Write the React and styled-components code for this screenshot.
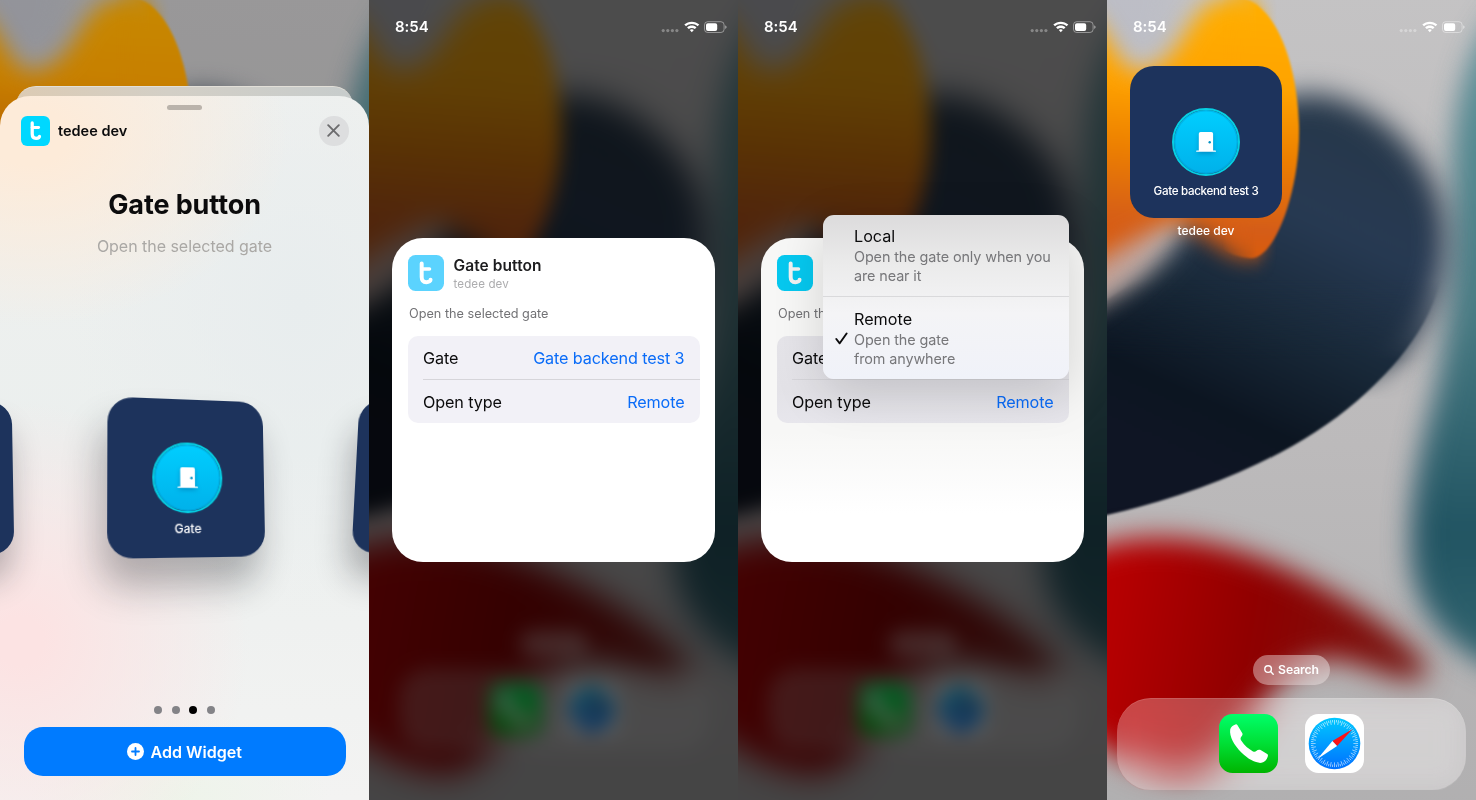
import React, { useId } from "react";
import styled, { createGlobalStyle, css } from "styled-components";

const GlobalStyle = createGlobalStyle`
  * { box-sizing: border-box; }
  body {
    margin: 0;
    overflow: hidden;
    font-family: Inter, "Liberation Sans", sans-serif;
    color: #0b0b0c;
    background: #b9b8b9;
  }
`;

const Gallery = styled.main`
  display: flex;
  width: 1476px;
  height: 800px;
`;

const Phone = styled.section`
  position: relative;
  flex: 0 0 369px;
  height: 800px;
  overflow: hidden;
  isolation: isolate;
  display: flex;
  flex-direction: column;
`;

const Backdrop = styled.div`
  position: absolute;
  inset: 0;
  z-index: -1;
  overflow: hidden;
`;

const BackdropEffect = styled.div`
  position: absolute;
  inset: 0;
  ${(p) => p.$mode === "dim" && css`filter: brightness(0.78);`}
  ${(p) =>
    p.$mode === "blurred" &&
    css`
      inset: -30px;
      padding: 30px;
      filter: blur(9.5px) brightness(0.39) saturate(0.92);
    `}
`;

const WallpaperSvg = styled.svg`
  display: block;
  overflow: visible;
`;

const ORANGE =
  "M-90 5 L-20 12 C2 28,10 68,30 71 C55 70,68 50,80 30 C95 5,108 -3,128 -3 C166 -2,190 58,192 125 C194 188,168 262,142 258 C118 256,108 242,90 232 C62 208,30 240,-90 305 Z";
const NAVY =
  "M-120 350 C-40 330,35 285,70 240 C110 180,135 94,200 94 C262 92,338 162,338 232 C341 300,306 352,250 401 C190 453,100 492,0 515 L-120 540 Z";
const RED =
  "M-90 600 C-40 548,10 536,60 538 C130 540,210 580,260 613 C300 640,340 676,310 680 C280 682,245 656,215 660 C180 668,162 692,140 725 C118 762,94 778,68 775 C40 770,15 762,-10 742 L-90 700 Z";
const TEAL =
  "M440 -60 L396 10 C366 44,350 100,348 160 C348 260,344 330,328 400 C314 450,301 510,306 565 C312 615,345 655,420 680 Z";

function Wallpaper() {
  const id = useId().replace(/[^a-zA-Z0-9]/g, "");
  const ref = (name) => `url(#${id}${name})`;
  return (
    <WallpaperSvg width="369" height="800" viewBox="0 0 369 800">
      <defs>
        <linearGradient id={id + "bg"} x1="0" y1="0" x2="0" y2="1">
          <stop offset="0" stopColor="#c5c4c5" />
          <stop offset="0.55" stopColor="#bcbabb" />
          <stop offset="1" stopColor="#afaeaf" />
        </linearGradient>
        <linearGradient id={id + "or"} gradientUnits="userSpaceOnUse" x1="60" y1="0" x2="40" y2="270">
          <stop offset="0" stopColor="#ffae00" />
          <stop offset="0.3" stopColor="#ffa300" />
          <stop offset="0.55" stopColor="#ed8000" />
          <stop offset="0.82" stopColor="#d55d18" />
          <stop offset="1" stopColor="#dc5a05" />
        </linearGradient>
        <linearGradient id={id + "nv"} gradientUnits="userSpaceOnUse" x1="270" y1="120" x2="110" y2="470">
          <stop offset="0" stopColor="#263749" />
          <stop offset="0.3" stopColor="#273a53" />
          <stop offset="0.6" stopColor="#182838" />
          <stop offset="0.85" stopColor="#0c1521" />
          <stop offset="1" stopColor="#0f1524" />
        </linearGradient>
        <linearGradient id={id + "rd"} gradientUnits="userSpaceOnUse" x1="0" y1="600" x2="300" y2="650">
          <stop offset="0" stopColor="#b80001" />
          <stop offset="0.5" stopColor="#8e0000" />
          <stop offset="1" stopColor="#781511" />
        </linearGradient>
        <linearGradient id={id + "tl"} x1="0" y1="0" x2="0" y2="1">
          <stop offset="0.05" stopColor="#5a959b" />
          <stop offset="0.5" stopColor="#487b83" />
          <stop offset="0.8" stopColor="#215462" />
          <stop offset="1" stopColor="#336670" />
        </linearGradient>
        <linearGradient id={id + "rf"} gradientUnits="userSpaceOnUse" x1="115" y1="0" x2="150" y2="0">
          <stop offset="0" stopColor="#000" />
          <stop offset="1" stopColor="#fff" />
        </linearGradient>
        <linearGradient id={id + "lf"} gradientUnits="userSpaceOnUse" x1="150" y1="0" x2="170" y2="0">
          <stop offset="0" stopColor="#fff" />
          <stop offset="1" stopColor="#000" />
        </linearGradient>
        <linearGradient id={id + "df"} gradientUnits="userSpaceOnUse" x1="0" y1="280" x2="0" y2="360">
          <stop offset="0" stopColor="#000" />
          <stop offset="1" stopColor="#fff" />
        </linearGradient>
        <linearGradient id={id + "uf"} gradientUnits="userSpaceOnUse" x1="0" y1="360" x2="0" y2="400">
          <stop offset="0" stopColor="#fff" />
          <stop offset="1" stopColor="#000" />
        </linearGradient>
        {[["r", "rf"], ["l", "lf"], ["d", "df"], ["u", "uf"]].map(([m, g]) => (
          <mask key={m} id={id + "m" + m} maskUnits="userSpaceOnUse" x="-150" y="-100" width="650" height="1000">
            <rect x="-150" y="-100" width="650" height="1000" fill={ref(g)} />
          </mask>
        ))}
        {[1, 11, 14].map((n) => (
          <filter
            key={n}
            id={id + "b" + n}
            filterUnits="userSpaceOnUse"
            x="-180"
            y="-150"
            width="720"
            height="1100"
            colorInterpolationFilters="sRGB"
          >
            <feGaussianBlur stdDeviation={n} />
          </filter>
        ))}
      </defs>
      <rect x="-60" y="-60" width="500" height="920" fill={ref("bg")} />
      <path d="M-40 -40 L80 -40 L60 50 L-10 60Z" fill="#b5b9ca" opacity="0.45" filter={ref("b14")} />
      <g filter={ref("b14")}>
        <path d={TEAL} fill="#8891a4" opacity="0.5" />
      </g>
      <path d={TEAL} fill={ref("tl")} filter={ref("b14")} />
      <g mask={ref("mu")}>
        <path d={NAVY} fill={ref("nv")} filter={ref("b14")} />
      </g>
      <g mask={ref("md")}>
        <path d={NAVY} fill={ref("nv")} filter={ref("b1")} />
      </g>
      <path d="M-60 215 L60 190 L54 234 C38 262,15 284,-60 328Z" fill="#c39a8d" filter={ref("b14")} />
      <g mask={ref("ml")}>
        <path d={ORANGE} fill={ref("or")} filter={ref("b11")} />
      </g>
      <g mask={ref("mr")}>
        <path d={ORANGE} fill={ref("or")} filter={ref("b1")} />
      </g>
      <path d={RED} fill={ref("rd")} filter={ref("b14")} />
    </WallpaperSvg>
  );
}

const HomeLayer = styled.div`
  position: absolute;
  top: 30px;
  left: 30px;
  width: 369px;
  height: 800px;
  transform-origin: 0 0;
  transform: translate(21px, 49.5px) scale(0.887);
`;

const HomeBottom = styled.div`
  width: 100%;
  height: 800px;
  display: flex;
  flex-direction: column;
  justify-content: flex-end;
  align-items: center;
  gap: 13px;
  padding: 0 10px 10px;
`;

const SearchPill = styled.div`
  display: flex;
  align-items: center;
  justify-content: center;
  gap: 4px;
  width: 77px;
  height: 30px;
  border-radius: 15px;
  background: rgba(255, 255, 255, 0.38);
  backdrop-filter: blur(8px);
  color: #fff;
  font-size: 12.2px;
  font-weight: 600;
  letter-spacing: -0.1px;
`;

const Dock = styled.div`
  width: 349px;
  height: 92.5px;
  display: flex;
  justify-content: center;
  align-items: center;
  gap: 27px;
  border-radius: 34px;
  background: ${(p) => (p.$receded ? "rgba(228, 225, 226, 0.28)" : "rgba(255, 252, 253, 0.28)")};
  backdrop-filter: ${(p) => (p.$receded ? "none" : "blur(14px) brightness(1.08)")};
  box-shadow: inset 0 1px 0 rgba(255, 255, 255, 0.12);
`;

const AppIcon = styled.svg`
  display: block;
  width: 59px;
  height: 59px;
`;

function PhoneIcon() {
  const id = useId().replace(/[^a-zA-Z0-9]/g, "");
  return (
    <AppIcon viewBox="0 0 59 59">
      <defs>
        <linearGradient id={id} x1="0" y1="0" x2="0" y2="1">
          <stop offset="0" stopColor="#00ff6a" />
          <stop offset="0.5" stopColor="#00df35" />
          <stop offset="1" stopColor="#00b400" />
        </linearGradient>
      </defs>
      <rect width="59" height="59" rx="13.5" fill={`url(#${id})`} />
      <path
        d="M11.2 15.6 C11.7 13 14.2 10.9 16.5 10.4 C17.6 10.2 18.2 10.8 18.8 11.8 L23.2 19 C23.8 20.2 23.6 21.1 22.8 22 C21.2 23.8 21.3 25.1 22.2 26.6 C25.4 31.5 29.6 35.1 34 37.4 C35.5 38.1 36.4 37.9 37.3 37 C38.7 35.6 40.3 35.4 42 36.2 L47.8 39.7 C49.1 40.5 49.2 41.4 48.7 42.7 C47.7 45.8 45.6 48.3 42.5 48.8 C37.5 49.5 29.5 45.7 22.4 38.6 C15.2 31.4 10.2 22.6 11.2 15.6 Z"
        fill="#fff"
      />
    </AppIcon>
  );
}

function SafariIcon() {
  const id = useId().replace(/[^a-zA-Z0-9]/g, "");
  return (
    <AppIcon viewBox="0 0 59 59">
      <defs>
        <linearGradient id={id} x1="0" y1="0" x2="0" y2="1">
          <stop offset="0" stopColor="#00c8ff" />
          <stop offset="1" stopColor="#0070ff" />
        </linearGradient>
      </defs>
      <rect width="59" height="59" rx="13.5" fill="#fff" />
      <circle cx="29.5" cy="29.5" r="25.8" fill={`url(#${id})`} />
      {Array.from({ length: 72 }, (_, i) => (
        <line
          key={i}
          x1="29.5"
          x2="29.5"
          y1="5.9"
          y2={i % 2 ? 8.4 : 10.6}
          stroke="#fff"
          strokeWidth="0.65"
          opacity="0.85"
          transform={`rotate(${i * 5} 29.5 29.5)`}
        />
      ))}
      <path d="M47.6 14.9 L27.4 26.9 L32.1 32 Z" fill="#fb1318" />
      <path d="M12.4 44.9 L27.4 26.9 L32.1 32 Z" fill="#fff" />
    </AppIcon>
  );
}

function HomeDock({ receded }) {
  return (
    <HomeBottom>
      <SearchPill>
        {!receded && (
          <>
            <svg width="10" height="10" viewBox="0 0 10 10" fill="none" stroke="currentColor" strokeWidth="1.4" strokeLinecap="round">
              <circle cx="4.1" cy="4.1" r="3.3" />
              <path d="M6.6 6.6 L9.2 9.2" />
            </svg>
            Search
          </>
        )}
      </SearchPill>
      <Dock $receded={receded}>
        <PhoneIcon />
        <SafariIcon />
      </Dock>
    </HomeBottom>
  );
}

function BlurredHome() {
  return (
    <Backdrop>
      <BackdropEffect $mode="blurred">
        <Wallpaper />
        <HomeLayer>
          <HomeDock receded />
        </HomeLayer>
      </BackdropEffect>
    </Backdrop>
  );
}

const StatusRow = styled.header`
  flex: none;
  display: flex;
  align-items: center;
  justify-content: space-between;
  height: 53px;
  padding: 0 11px 0 26px;
  color: #fff;
`;

const Clock = styled.span`
  font-size: 15px;
  font-weight: 600;
  letter-spacing: -0.05px;
`;

function StatusBar() {
  return (
    <StatusRow>
      <Clock>8:54</Clock>
      <svg width="66" height="14" viewBox="0 0 66 14" fill="#fff">
        <g opacity="0.33">
          <circle cx="2.2" cy="10.6" r="1.6" />
          <circle cx="6.8" cy="10.6" r="1.6" />
          <circle cx="11.4" cy="10.6" r="1.6" />
          <circle cx="15.9" cy="10.6" r="1.6" />
        </g>
        <path d="M23.3 4.6 C27.4 0.7 34.2 0.7 38.3 4.6 L36.6 6.3 C33.4 3.3 28.2 3.3 25 6.3 Z" />
        <path d="M26.1 7.4 C28.7 4.9 32.9 4.9 35.5 7.4 L33.8 9.1 C32.1 7.5 29.5 7.5 27.8 9.1 Z" />
        <path d="M28.8 10.1 C29.9 9 31.7 9 32.8 10.1 L30.8 12.2 Z" />
        <rect x="43.5" y="1.7" width="19.6" height="10.8" rx="3.2" fill="none" stroke="#fff" strokeOpacity="0.42" />
        <path d="M64.2 5.2 Q65.7 6 65.7 7.1 T64.2 9 Z" opacity="0.5" />
        <rect x="45" y="3.2" width="11.2" height="7.8" rx="1.9" />
      </svg>
    </StatusRow>
  );
}

const LogoBox = styled.span`
  flex: none;
  display: block;
  width: ${(p) => p.$size}px;
  height: ${(p) => p.$size}px;
  border-radius: ${(p) => p.$size * 0.21}px;
  background: ${(p) => p.$color};
`;

function TedeeLogo({ size, color, ink = "#fff" }) {
  return (
    <LogoBox $size={size} $color={color}>
      <svg width={size} height={size} viewBox="0 0 30 30" fill="none" stroke={ink} strokeWidth="3.3" strokeLinecap="round" strokeLinejoin="round">
        <path d="M11.4 7.1 V18.4 C11.4 21.4 13 22.7 15.3 22.7 C17.6 22.7 18.8 21.6 18.8 20.6" />
        <path d="M11.4 11.7 H17.9" strokeWidth="3" />
      </svg>
    </LogoBox>
  );
}

const WidgetTile = styled.div`
  flex: none;
  width: 152px;
  height: 152px;
  display: flex;
  flex-direction: column;
  align-items: center;
  padding-top: 42px;
  gap: 7px;
  border-radius: 24px;
  background: #1d335c;
  color: #fff;
`;

const WidgetDisc = styled.div`
  flex: none;
  width: 68px;
  height: 68px;
  display: grid;
  place-items: center;
  border-radius: 50%;
  border: 2px solid #06cfe3;
  background: linear-gradient(#00ceff, #00b1ea) padding-box;
  box-shadow: inset 0 0 0 1.5px rgba(0, 150, 200, 0.35);
`;

const WidgetLabel = styled.span`
  font-size: 11.6px;
  line-height: 16px;
  font-weight: 550;
  letter-spacing: ${(p) => p.$tracking || 0}px;
  white-space: nowrap;
`;

const DoorSvg = styled.svg`
  display: block;
  filter: drop-shadow(0 2px 2px rgba(0, 60, 120, 0.35));
`;

function Widget({ label, tracking }) {
  return (
    <>
      <WidgetDisc>
        <DoorSvg width="20" height="20" viewBox="0 0 20 20" fill="#fff">
          <path d="M4.6 0 H15.3 Q17.1 0 17.1 1.8 V18.4 H19.3 Q19.9 18.4 19.9 19.1 V19.7 H0.2 V19.1 Q0.2 18.4 0.8 18.4 H2.8 V1.8 Q2.8 0 4.6 0 Z" />
          <circle cx="13.7" cy="10.3" r="1.2" fill="#0091c4" />
        </DoorSvg>
      </WidgetDisc>
      <WidgetLabel $tracking={tracking}>{label}</WidgetLabel>
    </>
  );
}

/* Widget gallery sheet */

const BackSheet = styled.div`
  flex: none;
  width: 337px;
  height: 40px;
  margin: 86px 0 -30px 16px;
  border-radius: 20px 20px 0 0;
  border-top: 1px solid #e2dfd8;
  background: linear-gradient(90deg, #dccbb4, #d3cfc6 45%, #c7cccc);
`;

const Sheet = styled.div`
  position: relative;
  flex: 1;
  display: flex;
  flex-direction: column;
  align-items: center;
  border-radius: 30px 30px 0 0;
  background:
    radial-gradient(ellipse 260px 190px at 30px 40px, #fdebd9 15%, rgba(253, 235, 217, 0) 100%),
    radial-gradient(ellipse 230px 240px at 20px 545px, #fce3e3 10%, rgba(252, 227, 227, 0) 100%),
    radial-gradient(ellipse 150px 90px at 180px 704px, #eef4ea, rgba(238, 244, 234, 0)),
    radial-gradient(ellipse 230px 300px at 300px 210px, #e8edee, rgba(232, 237, 238, 0)),
    linear-gradient(#f0f1ef, #ebefee 50%, #f3f3f2);
`;

const Grabber = styled.div`
  width: 35px;
  height: 5px;
  margin-top: 8.5px;
  border-radius: 3px;
  background: #bab3ab;
`;

const SheetHeader = styled.div`
  width: 100%;
  display: flex;
  align-items: center;
  gap: 8px;
  padding: 6.5px 20.5px 0;
`;

const SheetApp = styled.span`
  flex: 1;
  font-size: 14.5px;
  font-weight: 600;
  letter-spacing: 0;
`;

const CloseButton = styled.button`
  display: grid;
  place-items: center;
  width: 29.5px;
  height: 29.5px;
  padding: 0;
  border: 0;
  border-radius: 50%;
  background: #dddedf;
  color: #6c6c6e;
`;

const SheetTitle = styled.h1`
  margin: 42.5px 0 0;
  font-size: 27px;
  line-height: 34px;
  font-weight: 700;
  letter-spacing: -0.1px;
`;

const SheetSubtitle = styled.p`
  margin: 13.5px 0 0;
  font-size: 16px;
  line-height: 20px;
  letter-spacing: -0.03px;
  color: #aaa8a5;
`;

const Carousel = styled.div`
  width: 369px;
  height: 162px;
  margin-top: 141px;
  display: flex;
  justify-content: space-between;
`;

const SideTile = styled.div`
  flex: none;
  width: 90px;
  height: 153px;
  margin-top: 4.5px;
  border-radius: 23px;
  background: #1d335c;
  box-shadow: -4px 26px 32px rgba(20, 20, 25, 0.3);
  ${(p) =>
    p.$side === "left"
      ? css`margin-left: -77.5px; transform: translate(0px, 0.5px) skewX(1deg);`
      : css`margin-right: -77.5px; transform: translate(-1.5px, -1px) skewX(-3deg);`}
`;

const FrontTile = styled(WidgetTile)`
  margin-left: 4px;
  margin-right: 13px;
  transform-origin: 0 0;
  transform: translate(3px, 0px)
    matrix3d(1.07591, 0.04146, 0, 0.00036125, -0.003289, 1.04454, 0, -0.00014355, 0, 0, 1, 0, 0.5, -0.5, 0, 1);
  box-shadow: -6px 26px 34px rgba(20, 20, 25, 0.3);
`;

const Dots = styled.div`
  display: flex;
  gap: 9.5px;
  margin-top: 147px;
`;

const Dot = styled.span`
  width: 8px;
  height: 8px;
  border-radius: 50%;
  background: ${(p) => (p.$active ? "#000" : "#838387")};
`;

const AddButton = styled.button`
  display: flex;
  align-items: center;
  justify-content: center;
  gap: 6.5px;
  width: 322px;
  height: 49px;
  margin-top: 13px;
  padding: 1px 0 0;
  border: 0;
  border-radius: 19px;
  background: #007bff;
  color: #fff;
  font: 600 16.1px Inter, sans-serif;
`;

function GalleryPhone() {
  return (
    <Phone>
      <Backdrop>
        <BackdropEffect $mode="dim">
          <Wallpaper />
        </BackdropEffect>
      </Backdrop>
      <BackSheet />
      <Sheet>
        <Grabber />
        <SheetHeader>
          <TedeeLogo size={29.5} color="#00d8ff" />
          <SheetApp>tedee dev</SheetApp>
          <CloseButton aria-label="Close">
            <svg width="13" height="13" viewBox="0 0 13 13" stroke="currentColor" strokeWidth="1.9" strokeLinecap="round">
              <path d="M1.2 1.2 L11.8 11.8 M11.8 1.2 L1.2 11.8" />
            </svg>
          </CloseButton>
        </SheetHeader>
        <SheetTitle>Gate button</SheetTitle>
        <SheetSubtitle>Open the selected gate</SheetSubtitle>
        <Carousel>
          <SideTile $side="left" />
          <FrontTile>
            <Widget label="Gate" />
          </FrontTile>
          <SideTile $side="right" />
        </Carousel>
        <Dots>
          <Dot />
          <Dot />
          <Dot $active />
          <Dot />
        </Dots>
        <AddButton>
          <svg width="17" height="17" viewBox="0 0 17 17">
            <circle cx="8.5" cy="8.5" r="8.5" fill="#fff" />
            <path d="M8.5 5 V12 M5 8.5 H12" stroke="#007bff" strokeWidth="1.8" strokeLinecap="round" />
          </svg>
          Add Widget
        </AddButton>
      </Sheet>
    </Phone>
  );
}

/* Widget settings card */

const Card = styled.div`
  position: relative;
  width: 323.5px;
  height: 324px;
  margin: 185px 0 0 22.5px;
  padding: 16.5px 15px 0 16px;
  border-radius: 31px;
  background: ${(p) => (p.$covered ? "linear-gradient(#f7f7f6, #f7f7f6 60%, #fff 85%)" : "#fff")};
`;

const CardHeader = styled.div`
  display: flex;
  gap: 10px;
  height: 37px;
`;

const CardTitles = styled.div`
  display: flex;
  flex-direction: column;
  padding-top: 1px;
`;

const CardTitle = styled.span`
  font-size: 15.5px;
  line-height: 20px;
  font-weight: 600;
  letter-spacing: 0.08px;
  color: #1c1c1e;
`;

const CardApp = styled.span`
  font-size: 11.6px;
  line-height: 17px;
  letter-spacing: 0.1px;
  color: #adadaf;
`;

const CardText = styled.p`
  margin: 13px 0 14.5px 1.5px;
  font-size: 12.7px;
  line-height: 17px;
  color: #727275;
`;

const FieldGroup = styled.div`
  display: flex;
  flex-direction: column;
  height: 87px;
  border-radius: 10px;
  background: ${(p) => (p.$covered ? "linear-gradient(#e5e4e9, #e3e2e7 60%, #e7e6ec)" : "#f2f1f7")};
`;

const Field = styled.div`
  flex: 1;
  display: flex;
  align-items: center;
  justify-content: space-between;
  margin-left: 15.5px;
  padding-right: 15.5px;
  font-size: 16.2px;
  letter-spacing: -0.12px;
  & + & { border-top: 1px solid #d6d5da; }
`;

const FieldValue = styled.span`
  color: #0a6cf8;
`;

const Menu = styled.div`
  position: absolute;
  left: 62px;
  top: -23.5px;
  width: 246px;
  height: 164.5px;
  display: flex;
  flex-direction: column;
  border-radius: 11px;
  background: linear-gradient(#dcdbdc, #ebebeb 30%, #f4f4f6 60%, #f0f2f9);
  box-shadow: 0 14px 50px rgba(0, 0, 0, 0.15);
`;

const MenuItem = styled.div`
  flex: 1;
  display: flex;
  align-items: center;
  padding-top: 1.2px;
  & + & { border-top: 1.5px solid #d9d9db; }
`;

const MenuMark = styled.span`
  flex: 0 0 31.5px;
  display: flex;
  justify-content: flex-end;
  padding-right: 6.5px;
`;

const MenuCopy = styled.div`
  display: flex;
  flex-direction: column;
`;

const MenuTitle = styled.span`
  font-size: 16.2px;
  line-height: 21px;
`;

const MenuLine = styled.span`
  font-size: 14.4px;
  line-height: 19.5px;
  letter-spacing: -0.1px;
  color: #77777a;
  white-space: nowrap;
`;

function OpenTypeMenu() {
  return (
    <Menu>
      <MenuItem>
        <MenuMark />
        <MenuCopy>
          <MenuTitle>Local</MenuTitle>
          <MenuLine>Open the gate only when you</MenuLine>
          <MenuLine>are near it</MenuLine>
        </MenuCopy>
      </MenuItem>
      <MenuItem>
        <MenuMark>
          <svg width="13" height="13" viewBox="0 0 13 13" fill="none" stroke="#0b0b0c" strokeWidth="1.9" strokeLinecap="round" strokeLinejoin="round">
            <path d="M1.3 7 L4.7 11.3 L11.6 1.5" />
          </svg>
        </MenuMark>
        <MenuCopy>
          <MenuTitle>Remote</MenuTitle>
          <MenuLine>Open the gate</MenuLine>
          <MenuLine>from anywhere</MenuLine>
        </MenuCopy>
      </MenuItem>
    </Menu>
  );
}

function SettingsPhone({ menuOpen }) {
  return (
    <Phone>
      <BlurredHome />
      <StatusBar />
      <Card $covered={menuOpen}>
        <CardHeader>
          <TedeeLogo size={36} color={menuOpen ? "#06c8ef" : "#5bd3fe"} ink={menuOpen ? "#f2f2f2" : "#fff"} />
          {!menuOpen && (
            <CardTitles>
              <CardTitle>Gate button</CardTitle>
              <CardApp>tedee dev</CardApp>
            </CardTitles>
          )}
        </CardHeader>
        <CardText>{menuOpen ? "Open th" : "Open the selected gate"}</CardText>
        <FieldGroup $covered={menuOpen}>
          <Field>
            Gate {!menuOpen && <FieldValue>Gate backend test 3</FieldValue>}
          </Field>
          <Field>
            Open type <FieldValue>Remote</FieldValue>
          </Field>
        </FieldGroup>
        {menuOpen && <OpenTypeMenu />}
      </Card>
    </Phone>
  );
}

/* Home screen with the placed widget */

const HomeWidget = styled.div`
  flex: none;
  width: 152px;
  margin: 13px 0 0 23px;
  display: flex;
  flex-direction: column;
  align-items: center;
  gap: 4px;
`;

const HomeWidgetName = styled.span`
  font-size: 12px;
  line-height: 17px;
  font-weight: 450;
  color: #fff;
`;

function HomePhone() {
  return (
    <Phone>
      <Backdrop>
        <Wallpaper />
      </Backdrop>
      <StatusBar />
      <HomeWidget>
        <WidgetTile>
          <Widget label="Gate backend test 3" tracking={-0.32} />
        </WidgetTile>
        <HomeWidgetName>tedee dev</HomeWidgetName>
      </HomeWidget>
      <HomeDock />
    </Phone>
  );
}

export default function App() {
  return (
    <>
      <GlobalStyle />
      <Gallery>
        <GalleryPhone />
        <SettingsPhone />
        <SettingsPhone menuOpen />
        <HomePhone />
      </Gallery>
    </>
  );
}
